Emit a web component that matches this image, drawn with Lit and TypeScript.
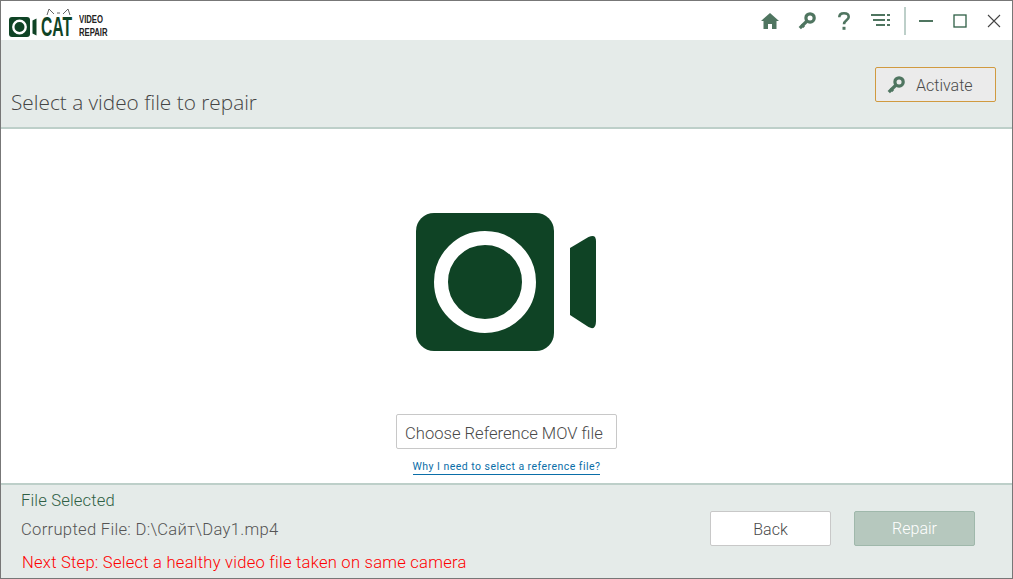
import { LitElement, html, css } from "lit";
import { customElement } from "lit/decorators.js";

const keyIcon = (size: number) => html`<svg width=${size} height=${size} viewBox="0 0 20 20" fill="none" stroke="#4f7560">
  <circle cx="13.4" cy="6.600" r="4.600" stroke-width="3.600"/>
  <path stroke-width="3.600" d="M10 10 2 18"/>
  <path stroke-width="2.800" d="M3.800 13.800 6.800 16.800"/>
</svg>`;

@customElement("app-root")
export class AppRoot extends LitElement {
  static styles = css`
    :host { display: block; }
    .win {
      box-sizing: border-box; width: 1013px; height: 579px; border: 1px solid #777;
      display: flex; flex-direction: column; background: #fff; overflow: hidden;
      font-family: "Roboto", "Liberation Sans", sans-serif; font-weight: 300; color: #4a4a4a;
    }
    .top { height: 39px; display: flex; align-items: center; padding: 0 1px 0 8px; flex: none; }
    .logo { display: flex; align-items: center; height: 39px; position: relative; padding-top: 12px; box-sizing: border-box; }
    .cat-wrap { width: 33px; margin-left: 4px; height: 24px; position: relative; }
    .cat {
      display: block; font: 700 28px/24px "Liberation Sans", sans-serif; color: #0f4325;
      transform: scaleX(.56); transform-origin: 0 50%; white-space: nowrap;
    }
    .ears { position: absolute; left: 37px; top: 7px; }
    .vr {
      margin: 0 0 2px 5px; width: 30px; font: 700 11px/12.7px "Liberation Sans", sans-serif; color: #222;
    }
    .vr span { display: block; transform: scaleX(.7); transform-origin: 0 50%; white-space: nowrap; }
    .spacer { flex: 1; }
    .tools { display: flex; align-items: center; height: 39px; }
    .tool { width: 37px; display: flex; justify-content: center; align-items: center; }
    .sep { width: 2px; height: 28px; background: #bdcfc9; margin: 0 3px 0 5px; }
    .wc { width: 34px; display: flex; justify-content: center; align-items: center; }
    .head {
      height: 87px; background: #e5ebe9; border-bottom: 2px solid #bdcfc9; flex: none;
      display: flex; justify-content: space-between; align-items: flex-start; padding: 0 16px 0 10px;
    }
    .title { font: 300 20.8px/26px "Open Sans", sans-serif; color: #444; margin-top: 49px; }
    .activate {
      box-sizing: border-box; width: 121px; height: 35px; margin-top: 27px; border: 1px solid #d09a40;
      border-radius: 2px; background: #ebebeb; display: flex; align-items: center; padding-left: 11px;
      font-size: 16px; gap: 11px;
    }
    .activate span { padding-top: 1px; }
    .body { flex: 1; display: flex; flex-direction: column; align-items: center; padding-top: 84px; }
    .cam { display: block; margin-right: 1px; }
    .choose {
      box-sizing: border-box; width: 221px; height: 35px; margin-top: 63px; border: 1px solid #c8c8c8;
      border-radius: 2px; background: #fff; font-size: 16.600px; display: flex; padding: 3px 0 0 8px;
      align-items: center; white-space: nowrap;
    }
    .why {
      margin-top: 12px; font: 400 10.5px/12px "Roboto", sans-serif; color: #0a6ea8;
      border-bottom: 1px solid #0a6ea8; padding-bottom: 1px; letter-spacing: .46px;
    }
    .foot {
      height: 93px; background: #e5ebe9; border-top: 2px solid #bdcfc9; flex: none; display: flex;
      justify-content: space-between; padding: 0 37px 0 20px;
    }
    .msgs { display: flex; flex-direction: column; font-size: 16.600px; line-height: 20px; }
    .m1 { color: #2f5f45; margin-top: 6px; letter-spacing: .15px; }
    .m2 { color: #555; margin-top: 9px; letter-spacing: .3px; }
    .m3 { color: #ff0000; margin: 13px 0 0 1px; letter-spacing: .23px; }
    .btns { display: flex; gap: 23px; padding-top: 26px; align-items: flex-start; }
    .btn {
      box-sizing: border-box; width: 121px; height: 35px; border: 1px solid #c8c8c8; border-radius: 2px;
      background: #fff; font-size: 16px; display: flex; align-items: center; justify-content: center;
      padding-top: 1px;
    }
    .btn.off { background: #b6c8be; border-color: #9fb8ab; color: #fff; padding-top: 0; }
  `;

  render() {
    return html`<div class="win">
      <div class="top">
        <div class="logo">
          <svg width="28" height="20" viewBox="0 0 28 20">
            <rect x="0" y="0" width="21" height="20" rx="3" fill="#0f4325"/>
            <circle cx="10.5" cy="10" r="6.200" fill="#0f4325" stroke="#fff" stroke-width="2.400"/>
            <path d="M23.500 3.500 27.500 1.500V18.500L23.500 16.500z" fill="#0f4325"/>
          </svg>
          <div class="cat-wrap"><span class="cat">CAT</span></div>
          <svg class="ears" width="25" height="8" viewBox="0 0 25 8" fill="none" stroke="#555" stroke-width=".9">
            <path d="M1 7 3 1 8 6M11 5h3M17 6 22 1 24 7"/>
          </svg>
          <div class="vr"><span>VIDEO</span><span>REPAIR</span></div>
        </div>
        <div class="spacer"></div>
        <div class="tools">
          <div class="tool"><svg width="18" height="16" viewBox="0 0 18 16"><path fill="#4f7560" d="M9 0 18 8h-2.500v8H11v-5H7v5H2.500V8H0z"/></svg></div>
          <div class="tool">${keyIcon(18)}</div>
          <div class="tool"><svg width="12" height="18" viewBox="0 0 12 18" fill="none"><path stroke="#4f7560" stroke-width="2.600" d="M1.300 5.200C1.300 2.800 3.200 1.300 6 1.300s4.700 1.500 4.700 3.700c0 3.300-4.700 3.400-4.700 7.200"/><rect x="4.500" y="14.800" width="3" height="3" fill="#4f7560"/></svg></div>
          <div class="tool"><svg width="19" height="13" viewBox="0 0 19 13" fill="#4f7560"><rect x="0" y="0" width="14" height="2"/><rect x="2" y="5" width="12" height="2"/><rect x="5" y="10" width="9" height="2"/><rect x="16" y="0" width="3" height="2"/><rect x="16" y="5" width="3" height="2"/><rect x="16" y="10" width="3" height="2"/></svg></div>
        </div>
        <div class="sep"></div>
        <div class="tools">
          <div class="wc"><svg width="14" height="14" viewBox="0 0 14 14"><rect y="6" width="14" height="2" fill="#4f7560"/></svg></div>
          <div class="wc"><svg width="14" height="14" viewBox="0 0 14 14" fill="none"><rect x="1" y="1" width="12" height="12" stroke="#2f5f45" stroke-width="1.300"/></svg></div>
          <div class="wc"><svg width="14" height="14" viewBox="0 0 14 14" fill="none" stroke="#444" stroke-width="1.100"><path d="M1 1 13 13M13 1 1 13"/></svg></div>
        </div>
      </div>
      <div class="head">
        <div class="title">Select a video file to repair</div>
        <div class="activate">${keyIcon(18)}<span>Activate</span></div>
      </div>
      <div class="body">
        <svg class="cam" width="180" height="138" viewBox="0 0 180 138">
          <rect width="138" height="138" rx="18" fill="#0f4325"/>
          <circle cx="69" cy="69" r="44" fill="#0f4325" stroke="#fff" stroke-width="14"/>
          <path d="M154 35 172.500 24Q180 20.500 180 28V108Q180 118 172.500 114L154 102z" fill="#0f4325"/>
        </svg>
        <div class="choose">Choose Reference MOV file</div>
        <div class="why">Why I need to select a reference file?</div>
      </div>
      <div class="foot">
        <div class="msgs">
          <div class="m1">File Selected</div>
          <div class="m2">Corrupted File: D:\\Сайт\\Day1.mp4</div>
          <div class="m3">Next Step: Select a healthy video file taken on same camera</div>
        </div>
        <div class="btns">
          <div class="btn">Back</div>
          <div class="btn off">Repair</div>
        </div>
      </div>
    </div>`;
  }
}
